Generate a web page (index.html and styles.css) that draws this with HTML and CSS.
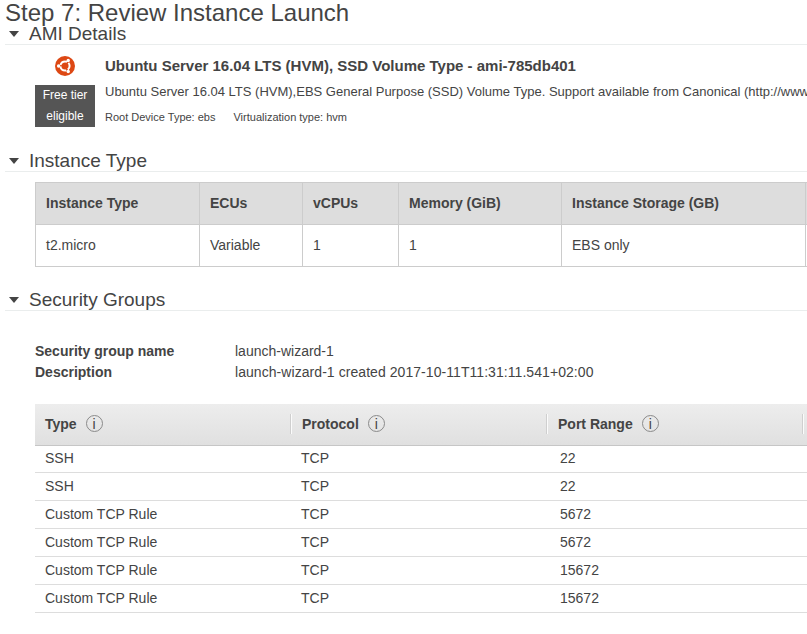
FILE: index.html
```html
<!DOCTYPE html>
<html lang="en">
<head>
<meta charset="utf-8">
<title>Step 7: Review Instance Launch</title>
<link rel="stylesheet" href="styles.css">
</head>
<body>
<main class="page">
  <h1 class="title">Step 7: Review Instance Launch</h1>

  <section class="ami-section">
    <h2 class="section-head"><span class="caret"></span>AMI Details</h2>
    <div class="ami">
      <div class="ami-side">
        <svg class="ubuntu" viewBox="0 0 20 20" width="20" height="20" aria-hidden="true">
          <circle cx="10" cy="10" r="10" fill="#dd4814"/>
          <circle cx="10" cy="10" r="4.6" fill="none" stroke="#fff" stroke-width="2" stroke-dasharray="8.03 1.6" stroke-dashoffset="4.01"/>
          <circle cx="3.6" cy="10" r="1.7" fill="#fff"/>
          <circle cx="13.2" cy="4.46" r="1.7" fill="#fff"/>
          <circle cx="13.2" cy="15.54" r="1.7" fill="#fff"/>
        </svg>
        <div class="badge">Free tier<br>eligible</div>
      </div>
      <div class="ami-info">
        <div class="ami-name">Ubuntu Server 16.04 LTS (HVM), SSD Volume Type - ami-785db401</div>
        <div class="ami-desc">Ubuntu Server 16.04 LTS (HVM),EBS General Purpose (SSD) Volume Type. Support available from Canonical (http://www</div>
        <div class="ami-meta"><span class="meta-item">Root Device Type: ebs</span><span>Virtualization type: hvm</span></div>
      </div>
    </div>
  </section>

  <section class="type-section">
    <h2 class="section-head"><span class="caret"></span>Instance Type</h2>
    <table class="type-table">
      <thead>
        <tr><th class="c1">Instance Type</th><th class="c2">ECUs</th><th class="c3">vCPUs</th><th class="c4">Memory (GiB)</th><th class="c5">Instance Storage (GB)</th><th class="c6"></th></tr>
      </thead>
      <tbody>
        <tr><td>t2.micro</td><td>Variable</td><td>1</td><td>1</td><td>EBS only</td><td class="c6"></td></tr>
      </tbody>
    </table>
  </section>

  <section class="sg-section">
    <h2 class="section-head"><span class="caret"></span>Security Groups</h2>
    <dl class="sg-details">
      <div class="sg-row"><dt>Security group name</dt><dd>launch-wizard-1</dd></div>
      <div class="sg-row"><dt>Description</dt><dd class="sg-desc">launch-wizard-1 created 2017-10-11T11:31:11.541+02:00</dd></div>
    </dl>
    <table class="rules">
      <thead>
        <tr>
          <th class="r1"><span class="th-in">Type<span class="info">i</span></span></th>
          <th class="r2"><span class="th-in">Protocol<span class="info">i</span></span></th>
          <th class="r3"><span class="th-in">Port Range<span class="info">i</span></span></th>
          <th class="r4"></th>
        </tr>
      </thead>
      <tbody>
        <tr><td>SSH</td><td class="proto">TCP</td><td class="port">22</td><td class="r4"></td></tr>
        <tr><td>SSH</td><td class="proto">TCP</td><td class="port">22</td><td class="r4"></td></tr>
        <tr><td>Custom TCP Rule</td><td class="proto">TCP</td><td class="port">5672</td><td class="r4"></td></tr>
        <tr><td>Custom TCP Rule</td><td class="proto">TCP</td><td class="port">5672</td><td class="r4"></td></tr>
        <tr><td>Custom TCP Rule</td><td class="proto">TCP</td><td class="port">15672</td><td class="r4"></td></tr>
        <tr><td>Custom TCP Rule</td><td class="proto">TCP</td><td class="port">15672</td><td class="r4"></td></tr>
      </tbody>
    </table>
  </section>
</main>
</body>
</html>
```
FILE: styles.css
```css
html, body {
  margin: 0;
  padding: 0;
  height: 100%;
  overflow: hidden;
  background: #fff;
}
body {
  font-family: "Liberation Sans", Arial, sans-serif;
  font-size: 14px;
  color: #444;
}
.page {
  padding-left: 5px;
}
.title {
  margin: 0;
  padding-top: 2px;
  font-size: 24px;
  line-height: 22px;
  font-weight: 400;
  color: #444;
  white-space: nowrap;
}
.section-head {
  display: flex;
  align-items: flex-start;
  margin: 0;
  height: 20px;
  line-height: 19px;
  font-size: 19px;
  font-weight: 400;
  color: #444;
  border-bottom: 1px solid #eaeded;
}
.caret {
  width: 0;
  height: 0;
  margin: 7px 10px 0 4px;
  border-left: 5.5px solid transparent;
  border-right: 5.5px solid transparent;
  border-top: 6px solid #444;
}
.ami {
  display: flex;
  padding-top: 11px;
}
.ami-side {
  display: flex;
  flex-direction: column;
  align-items: center;
  width: 60px;
  margin-left: 30px;
}
.ubuntu {
  display: block;
  margin-bottom: 9px;
}
.badge {
  width: 60px;
  height: 42px;
  background: #555;
  color: #fff;
  font-size: 12px;
  line-height: 21px;
  text-align: center;
}
.ami-info {
  margin-left: 10px;
  white-space: nowrap;
}
.ami-name {
  font-size: 15px;
  line-height: 20px;
  font-weight: 700;
}
.ami-desc {
  margin-top: 7px;
  font-size: 13px;
  line-height: 18px;
}
.ami-meta {
  margin-top: 8px;
  font-size: 11px;
  line-height: 16px;
}
.meta-item {
  margin-right: 18px;
}
.type-section {
  padding-top: 24px;
}
.type-table {
  margin: 10px 0 0 30px;
  border-collapse: collapse;
  table-layout: fixed;
  width: 772px;
}
.type-table th, .type-table td {
  height: 42px;
  padding: 0 10px 2px;
  border: 1px solid #ccc;
  text-align: left;
  font-size: 14px;
  box-sizing: border-box;
}
.type-table th {
  background: #ddd;
  font-weight: 700;
}
.c1 { width: 164px; }
.c2 { width: 103px; }
.c3 { width: 96px; }
.c4 { width: 163px; }
.c5 { width: 244px; }
.type-table .c6 {
  width: 2px;
  padding: 0;
  border-right: 0;
}
.sg-section {
  padding-top: 23px;
}
.sg-details {
  margin: 30px 0 0 30px;
}
.sg-row {
  display: flex;
  height: 21px;
  line-height: 21px;
}
.sg-row dt {
  width: 200px;
  font-weight: 700;
}
.sg-row dd {
  margin: 0;
}
.sg-desc {
  letter-spacing: 0.06px;
}
.rules {
  margin: 21px 0 0 30px;
  border-collapse: separate;
  border-spacing: 0;
  table-layout: fixed;
  width: 772px;
}
.rules th {
  height: 42px;
  padding: 0 0 2px;
  text-align: left;
  font-weight: 700;
  background: linear-gradient(#ededed, #e0e0e0);
  border-bottom: 1px solid #c6c6c6;
  box-sizing: border-box;
}
.th-in {
  display: flex;
  align-items: center;
  height: 20px;
  padding-left: 10px;
  border-right: 1px solid #fbfbfb;
  box-shadow: inset -1px 0 0 #cfcfcf;
}
.r1 { width: 257px; }
.r2 { width: 256px; }
.r3 { width: 256px; }
.rules .r4 { width: 3px; padding: 0; }
.info {
  display: inline-flex;
  align-items: center;
  justify-content: center;
  box-sizing: border-box;
  width: 17px;
  height: 17px;
  margin-left: 9px;
  border: 1px solid #8a8a8a;
  border-radius: 50%;
  font-size: 14px;
  line-height: 1;
  font-weight: 400;
  color: #444;
}
.rules td {
  height: 28px;
  padding: 0 10px 2px;
  border-bottom: 1px solid #ddd;
  font-size: 14px;
  box-sizing: border-box;
}
.rules tbody tr:first-child td {
  height: 27px;
}
.rules td.proto {
  padding-left: 9px;
}
.rules td.port {
  padding-left: 12px;
}
```
